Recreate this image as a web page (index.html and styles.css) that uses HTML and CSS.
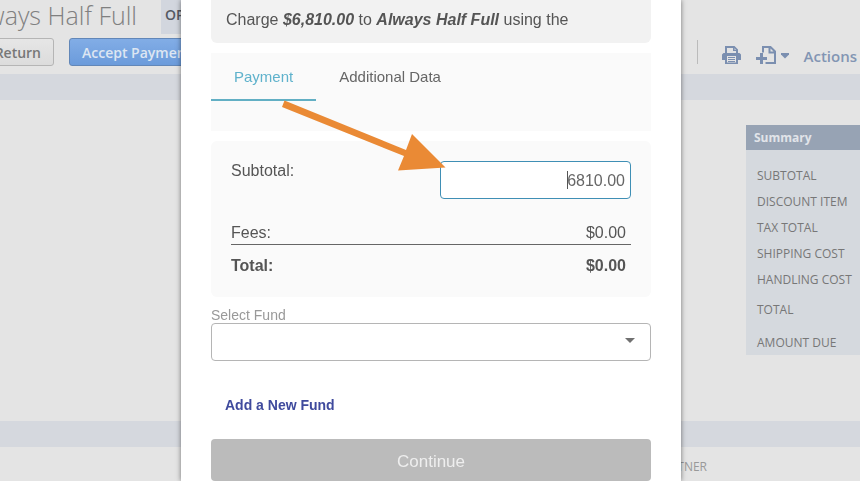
FILE: index.html
```
<!DOCTYPE html>
<html lang="en">
<head>
    <meta charset="UTF-8">
    <meta name="viewport" content="width=device-width, initial-scale=1.0">
    <title>Accept Payment</title>
    <link rel="stylesheet" href="styles.css">
</head>
<body>
    <div class="record">
        <header class="record-header">
            <div class="title-row">
                <h1 class="cut-left customer">Always Half Full</h1>
                <span class="status">OPEN</span>
            </div>
            <div class="toolbar">
                <div class="cut-left return-slot">
                    <button type="button" class="btn">Return</button>
                </div>
                <button type="button" class="btn btn-primary">Accept Payment</button>
                <div class="tools">
                    <button type="button" class="icon-btn" aria-label="Print">
                        <svg width="19" height="18" viewBox="0 0 19 18">
                            <path class="ink" d="M3 0h9.500l3.500 3.500v3.500h1.500l1.500 1.500v5.500h-3v4H3v-4H0V8.500L1.500 7H3z"/>
                            <path class="paper" d="M5 2h6v3h3v2H5zM12.500 2.200v1.600h1.600zM5 10h9v6.500H5z"/>
                            <path class="lines" d="M6 11.500h7M6 13.500h7M6 15.500h7"/>
                        </svg>
                    </button>
                    <button type="button" class="icon-btn" aria-label="New record">
                        <svg width="33" height="18" viewBox="0 0 33 18">
                            <path class="outline" d="M7 6.500V1h7.500l4.500 4.500V17H9.500M13.500 1v5.500H19"/>
                            <path class="cross" d="M5.500 7v11M0 12.500h11"/>
                            <path class="ink" d="M25 7h8v1.500L29 12.500 25 8.500z"/>
                        </svg>
                    </button>
                    <a href="#" class="actions">Actions</a>
                </div>
            </div>
        </header>
        <div class="band"></div>
        <main class="details">
            <section class="summary">
                <h2>Summary</h2>
                <ul>
                    <li>SUBTOTAL</li>
                    <li>DISCOUNT ITEM</li>
                    <li>TAX TOTAL</li>
                    <li>SHIPPING COST</li>
                    <li>HANDLING COST</li>
                    <li class="total">TOTAL</li>
                    <li class="due">AMOUNT DUE</li>
                </ul>
            </section>
        </main>
        <div class="band"></div>
        <div class="fields">
            <span class="cut-left partner">PARTNER</span>
        </div>
    </div>

    <div class="overlay">
        <div class="modal" role="dialog" aria-label="Accept Payment">
            <p class="charge">Charge <b>$6,810.00</b> to <b>Always Half Full</b> using the</p>

            <nav class="tabs">
                <button type="button" class="tab active">Payment</button>
                <button type="button" class="tab">Additional Data</button>
            </nav>

            <form class="payment" id="paymentForm">
                <div class="amounts">
                    <div class="row subtotal">
                        <label for="subtotal">Subtotal:</label>
                        <div class="amount-field">
                            <input type="text" id="subtotal" name="subtotal" value="6810.00">
                            <span class="caret"></span>
                        </div>
                    </div>
                    <div class="row fees">
                        <span>Fees:</span>
                        <span>$0.00</span>
                    </div>
                    <div class="row grand">
                        <span>Total:</span>
                        <span>$0.00</span>
                    </div>
                </div>

                <label class="fund-label" for="fund">Select Fund</label>
                <div class="fund-field">
                    <select id="fund" name="fund">
                        <option value=""></option>
                    </select>
                    <svg class="fund-arrow" width="10" height="5" viewBox="0 0 10 5">
                        <path d="M0 0h10L5 5z"/>
                    </svg>
                </div>

                <a href="#" class="add-fund">Add a New Fund</a>
                <button type="submit" class="continue">Continue</button>
            </form>

            <!-- arrow pointing at the amount -->
            <svg class="pointer" width="166" height="72" viewBox="0 0 166 72">
                <path d="M3.500 0.500L125 50l6-16 33.500 33.500L117 70.500l6-14.500L1 7z"/>
            </svg>
        </div>
    </div>
</body>
</html>
```
FILE: styles.css
```
* {
    box-sizing: border-box;
}
body {
    margin: 0;
    height: 100vh;
    overflow: hidden;
    background-color: #e4e4e4;
    font-family: "Liberation Sans", Arial, sans-serif;
    font-size: 16px;
    color: #555;
}
h1, h2, p, ul {
    margin: 0;
    padding: 0;
}
button, input, select {
    font-family: inherit;
}

/* record page behind the dialog */
.record {
    font-family: "Open Sans", "Noto Sans", sans-serif;
    color: #777;
}
.record-header {
    height: 74px;
}
.cut-left {
    display: flex;
    flex-shrink: 0;
    justify-content: flex-end;
    white-space: nowrap;
}
.title-row {
    display: flex;
    align-items: flex-start;
    gap: 24px;
    height: 38px;
}
.customer {
    width: 137px;
    font-size: 25px;
    font-weight: 300;
    line-height: 30px;
    color: #808080;
}
.status {
    height: 34px;
    padding: 0 4px;
    background-color: #d2d6de;
    font-size: 14px;
    font-weight: 600;
    line-height: 30px;
    color: #555a63;
}
.toolbar {
    display: flex;
    align-items: center;
}
.return-slot {
    width: 54px;
    margin-right: 15px;
}
.btn {
    flex-shrink: 0;
    height: 28px;
    padding: 0 12px;
    border: 1px solid #b5b5b5;
    border-radius: 3px;
    background: linear-gradient(#e6e6e6, #dcdcdc);
    font-size: 14px;
    font-weight: 600;
    color: #777;
}
.btn-primary {
    border-color: #6287b8;
    background: linear-gradient(#82ade6, #6b9bdb);
    color: #dde6f2;
}
.tools {
    display: flex;
    align-items: center;
    gap: 15px;
    height: 24px;
    margin-left: auto;
    padding-right: 3px;
    padding-left: 24px;
    border-left: 1px solid #bbb;
}
.icon-btn {
    display: flex;
    padding: 6px 0 0;
    border: none;
    background: none;
}
.ink {
    fill: #7b8fb0;
}
.paper {
    fill: #e4e4e4;
}
.lines {
    stroke: #7b8fb0;
}
.outline {
    fill: none;
    stroke: #7b8fb0;
    stroke-width: 2;
}
.cross {
    stroke: #7b8fb0;
    stroke-width: 3;
}
.actions {
    padding-top: 8px;
    font-size: 15px;
    font-weight: 600;
    color: #8295b3;
    text-decoration: none;
}
.band {
    height: 26px;
    background-color: #d5d8de;
}
.details {
    display: flex;
    justify-content: flex-end;
    padding: 25px 0 66px;
}
.summary {
    width: 114px;
    height: 230px;
    background-color: #d5d9de;
}
.summary h2 {
    padding-left: 8px;
    background-color: #97a3b4;
    font-size: 12px;
    font-weight: 700;
    line-height: 25px;
    color: #e1e4e9;
}
.summary ul {
    padding: 13px 0 0 11px;
    list-style: none;
    font-size: 12px;
    line-height: 26px;
    white-space: nowrap;
}
.summary .total {
    padding-top: 4px;
}
.summary .due {
    padding-top: 7px;
}
.fields {
    font-size: 12px;
    line-height: 40px;
    color: #999;
}
.partner {
    width: 707px;
}

/* payment dialog */
.overlay {
    position: fixed;
    inset: 0;
    display: flex;
    justify-content: center;
    padding-left: 2px;
    overflow: hidden;
}
.modal {
    position: relative;
    width: 500px;
    max-width: 100%;
    min-height: 100%;
    padding: 0 30px;
    background-color: #fff;
    box-shadow: 0 0 5px rgba(0, 0, 0, 0.5);
}
.charge {
    padding: 10px 15px 13px;
    border-radius: 0 0 6px 6px;
    background-color: #f2f2f2;
    line-height: 20px;
}
.charge b {
    font-style: italic;
}
.tabs {
    display: flex;
    align-items: flex-start;
    height: 78px;
    margin: 10px 0;
    background-color: #fafafa;
}
.tab {
    height: 48px;
    padding: 0 23px;
    border: none;
    border-bottom: 2px solid transparent;
    background: none;
    font-size: 15px;
    color: #666;
}
.tab.active {
    border-bottom-color: #62afc4;
    color: #5fb2cc;
}
.amounts {
    padding: 20px;
    border-radius: 6px;
    background-color: #fafafa;
}
.row {
    display: flex;
    justify-content: space-between;
    line-height: 20px;
}
.amount-field {
    position: relative;
    width: 191px;
}
.amount-field input {
    display: block;
    width: 100%;
    height: 38px;
    padding: 2px 5px 0;
    border: 1px solid #3f8fb5;
    border-radius: 4px;
    background-color: #fff;
    font-size: 16px;
    text-align: right;
    color: #666;
}
.caret {
    position: absolute;
    top: 10px;
    right: 63px;
    width: 1px;
    height: 18px;
    background-color: #555;
}
.fees {
    margin-top: 24px;
    padding: 0 5px 1px 0;
    border-bottom: 1px solid #666;
}
.grand {
    padding: 11px 5px 1px 0;
    font-weight: bold;
}
.fund-label {
    display: block;
    margin-top: 10px;
    font-size: 14px;
    line-height: 16px;
    color: #999;
}
.fund-field {
    position: relative;
}
.fund-field select {
    display: block;
    width: 100%;
    height: 38px;
    padding: 0 12px;
    border: 1px solid #b5b5b5;
    border-radius: 4px;
    background-color: #fff;
    appearance: none;
}
.fund-arrow {
    position: absolute;
    top: 15px;
    right: 16px;
    fill: #707070;
}
.add-fund {
    display: block;
    margin: 34px 14px 24px;
    font-size: 14px;
    font-weight: bold;
    line-height: 20px;
    color: #3f4a9d;
    text-decoration: none;
}
.continue {
    display: block;
    width: 100%;
    height: 42px;
    padding: 4px 0 0;
    border: none;
    border-radius: 4px;
    background-color: #bbb;
    font-size: 17px;
    color: #eee;
}
.pointer {
    position: absolute;
    top: 100px;
    left: 100px;
    fill: #ea8a35;
}
```
